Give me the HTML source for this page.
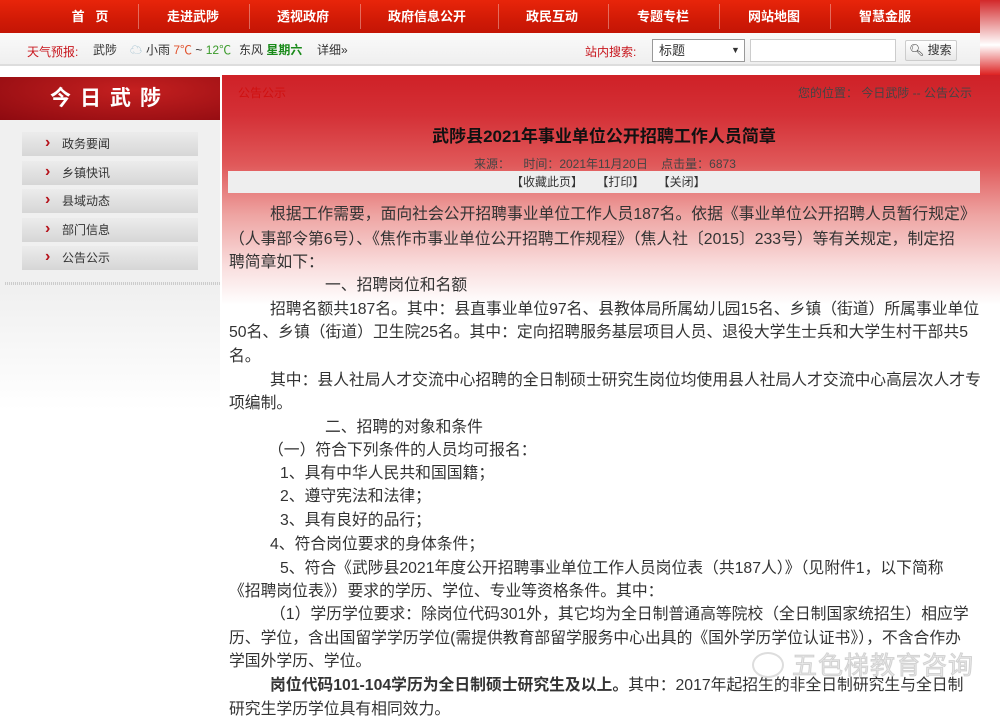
<!DOCTYPE html>
<html><head><meta charset="utf-8"><style>
*{margin:0;padding:0;box-sizing:border-box}
body{width:1000px;height:721px;overflow:hidden;background:#fff;font-family:"Liberation Sans","Noto Sans CJK SC",sans-serif;position:relative}
.abs{position:absolute}
#nav{left:0;top:0;width:980px;height:33px;background:linear-gradient(#e8250a,#d11a06 60%,#c41505);}
#navr{left:980px;top:0;width:20px;height:75px;background:linear-gradient(#d2282a,#fff 60%,#d22)}
.ni{position:absolute;top:0;height:33px;line-height:33px;color:#fff;font-weight:bold;font-size:13px;transform:translateX(-50%);white-space:nowrap}
.sep{position:absolute;top:4px;width:1px;height:25px;background:rgba(255,255,255,.35)}
#wb{left:0;top:33px;width:980px;height:33px;background:linear-gradient(#fafafa,#efefef);border-bottom:2px solid #ddd;font-size:12px;color:#333}
#wb span{position:absolute;top:8px;white-space:nowrap}
#main{left:222px;top:75px;width:778px;height:646px;background:linear-gradient(#cf2127 0px,#d43036 40px,#e0595a 90px,#eea4a2 140px,#f9dcdc 190px,#fff 230px)}
#side{left:0;top:120px;width:220px;height:290px;background:linear-gradient(#f0f0f0 0,#f0f0f0 170px,#fff 290px)}
#st{left:0;top:77px;width:220px;height:43px;background:radial-gradient(ellipse at 60% 30%,#c52020,#8e0a10);color:#fff;font-size:21px;font-weight:bold;letter-spacing:9px;text-align:center;line-height:43px}
.mi{position:absolute;left:22px;width:176px;height:24px;background:linear-gradient(#ececec,#d6d6d6);font-size:12px;color:#333;line-height:24px;padding-left:40px}
.mi:before{content:"›";position:absolute;left:23px;top:0;line-height:22px;color:#b5121b;font-weight:bold;font-size:16px}
.ln{position:absolute;left:229px;font-size:15.8px;color:#333;white-space:nowrap;line-height:20px}
</style></head><body>
<div id="nav" class="abs">
<div class="ni" style="left:90px">首&nbsp;&nbsp;&nbsp;页</div><div class="sep" style="left:138px"></div>
<div class="ni" style="left:193px">走进武陟</div><div class="sep" style="left:249px"></div>
<div class="ni" style="left:303px">透视政府</div><div class="sep" style="left:360px"></div>
<div class="ni" style="left:427px">政府信息公开</div><div class="sep" style="left:498px"></div>
<div class="ni" style="left:552px">政民互动</div><div class="sep" style="left:608px"></div>
<div class="ni" style="left:663px">专题专栏</div><div class="sep" style="left:719px"></div>
<div class="ni" style="left:774px">网站地图</div><div class="sep" style="left:830px"></div>
<div class="ni" style="left:885px">智慧金服</div>
</div>
<div id="navr" class="abs"></div>
<div id="wb" class="abs">
<span style="left:27px;top:10px;color:#c8161d">天气预报:</span>
<span style="left:93px">武陟</span>
<span style="left:130px;color:#9bc">☁</span>
<span style="left:146px">小雨 <font color="#e0502a">7℃</font> ~ <font color="#3a9a2a">12℃</font></span>
<span style="left:239px">东风 <b style="color:#1a8a1a;font-weight:bold">星期六</b></span>
<span style="left:317px">详细»</span>
<span style="left:585px;top:10px;color:#c8161d">站内搜索:</span>
<div class="abs" style="left:652px;top:6px;width:93px;height:23px;border:1px solid #999;background:#fff;font-size:13px;line-height:21px;padding-left:6px;color:#333">标题<span style="left:78px;top:0;font-size:9px">▼</span></div>
<div class="abs" style="left:750px;top:6px;width:146px;height:23px;border:1px solid #ccc;background:#fff"></div>
<div class="abs" style="left:905px;top:7px;width:52px;height:21px;border:1px solid #ccc;border-radius:2px;background:linear-gradient(#fff,#e8e8e8);font-size:12px;line-height:19px;padding-left:3px">🔍︎ 搜索</div>
</div>
<div id="main" class="abs"></div>
<div id="side" class="abs"></div>
<div class="abs" style="left:5px;top:282px;width:215px;height:3px;background:repeating-linear-gradient(90deg,#ccc 0 1px,#eee 1px 2px)"></div>
<div id="st" class="abs">今日武陟</div>
<div class="mi" style="top:132px">政务要闻</div>
<div class="mi" style="top:161px">乡镇快讯</div>
<div class="mi" style="top:189px">县域动态</div>
<div class="mi" style="top:218px">部门信息</div>
<div class="mi" style="top:246px">公告公示</div>
<div class="abs" style="left:238px;top:84px;font-size:12px;color:#d01010">公告公示</div>
<div class="abs" style="left:798px;top:84px;font-size:12px;color:#444;white-space:nowrap">您的位置：&nbsp;今日武陟 -- 公告公示</div>
<div class="abs" style="left:228px;top:122px;width:752px;text-align:center;font-size:17px;font-weight:bold;color:#111">武陟县2021年事业单位公开招聘工作人员简章</div>
<div class="abs" style="left:474px;top:155px;font-size:12px;color:#444;white-space:nowrap">来源：&nbsp;&nbsp;&nbsp;&nbsp;时间：2021年11月20日&nbsp;&nbsp;&nbsp;&nbsp;点击量：6873</div>
<div class="abs" style="left:228px;top:171px;width:752px;height:22px;background:#eee;font-size:12px;color:#333;line-height:22px;padding-left:283px;white-space:nowrap">【收藏此页】&nbsp;&nbsp;&nbsp;&nbsp;【打印】&nbsp;&nbsp;&nbsp;&nbsp;【关闭】</div>
<div class="ln" style="top:205px;left:270px">根据工作需要，面向社会公开招聘事业单位工作人员187名。依据《事业单位公开招聘人员暂行规定》</div>
<div class="ln" style="top:230px;left:229px">（人事部令第6号）、《焦作市事业单位公开招聘工作规程》（焦人社〔2015〕233号）等有关规定，制定招</div>
<div class="ln" style="top:253px">聘简章如下：</div>
<div class="ln" style="top:276px;left:325px">一、招聘岗位和名额</div>
<div class="ln" style="top:300px;left:270px">招聘名额共187名。其中：县直事业单位97名、县教体局所属幼儿园15名、乡镇（街道）所属事业单位</div>
<div class="ln" style="top:323px">50名、乡镇（街道）卫生院25名。其中：定向招聘服务基层项目人员、退役大学生士兵和大学生村干部共5</div>
<div class="ln" style="top:347px">名。</div>
<div class="ln" style="top:371px;left:270px">其中：县人社局人才交流中心招聘的全日制硕士研究生岗位均使用县人社局人才交流中心高层次人才专</div>
<div class="ln" style="top:394px">项编制。</div>
<div class="ln" style="top:418px;left:325px">二、招聘的对象和条件</div>
<div class="ln" style="top:441px;left:268px">（一）符合下列条件的人员均可报名：</div>
<div class="ln" style="top:464px;left:280px">1、具有中华人民共和国国籍；</div>
<div class="ln" style="top:487px;left:280px">2、遵守宪法和法律；</div>
<div class="ln" style="top:511px;left:280px">3、具有良好的品行；</div>
<div class="ln" style="top:535px;left:270px">4、符合岗位要求的身体条件；</div>
<div class="ln" style="top:559px;left:280px">5、符合《武陟县2021年度公开招聘事业单位工作人员岗位表（共187人）》（见附件1，以下简称</div>
<div class="ln" style="top:582px;left:229px">《招聘岗位表》）要求的学历、学位、专业等资格条件。其中：</div>
<div class="ln" style="top:605px;left:270px">（1）学历学位要求：除岗位代码301外，其它均为全日制普通高等院校（全日制国家统招生）相应学</div>
<div class="ln" style="top:629px">历、学位，含出国留学学历学位(需提供教育部留学服务中心出具的《国外学历学位认证书》），不含合作办</div>
<div class="ln" style="top:652px">学国外学历、学位。</div>
<div class="ln" style="top:676px;left:270px"><b>岗位代码101-104学历为全日制硕士研究生及以上。</b>其中：2017年起招生的非全日制研究生与全日制</div>
<div class="ln" style="top:700px">研究生学历学位具有相同效力。</div>
<div class="abs" style="left:752px;top:652px;width:32px;height:26px;border:2px solid #ddd;border-radius:50%;background:rgba(255,255,255,.5)"></div>
<div class="abs" style="left:792px;top:646px;font-size:25px;color:rgba(215,215,215,.55);white-space:nowrap;letter-spacing:1px;-webkit-text-stroke:1px rgba(170,170,170,.45)">五色梯教育咨询</div>
</body></html>
